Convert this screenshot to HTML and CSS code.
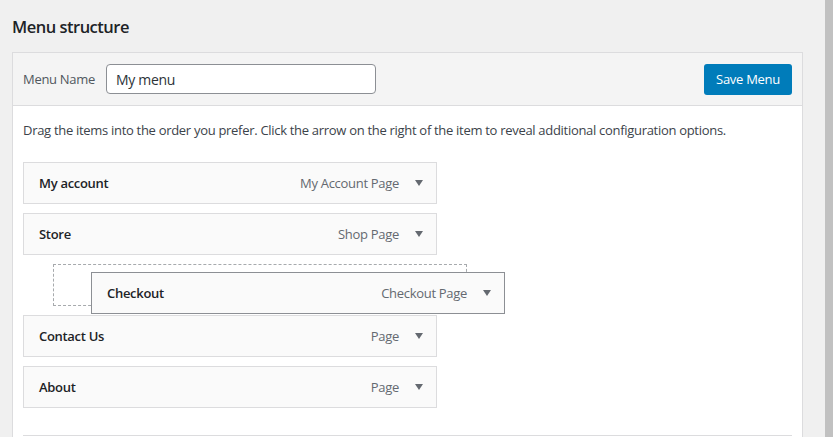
FILE: index.html
```html
<!DOCTYPE html>
<html lang="en">
<head>
<meta charset="utf-8">
<title>Menu structure</title>
<link rel="stylesheet" href="styles.css">
</head>
<body>
<div class="main">
  <h2 class="title">Menu structure</h2>
  <div class="panel">
    <div class="panel-header">
      <label class="name-label" for="menu-name">Menu Name</label>
      <input id="menu-name" class="name-input" type="text" value="My menu">
      <button class="save-btn" type="button">Save Menu</button>
    </div>
    <div class="panel-body">
      <p class="hint">Drag the items into the order you prefer. Click the arrow on the right of the item to reveal additional configuration options.</p>
      <ul class="menu-list">
        <li class="item"><span class="item-title">My account</span><span class="item-type">My Account Page</span><span class="arrow"></span></li>
        <li class="item"><span class="item-title">Store</span><span class="item-type">Shop Page</span><span class="arrow"></span></li>
        <li class="placeholder">
          <div class="item dragging"><span class="item-title">Checkout</span><span class="item-type">Checkout Page</span><span class="arrow"></span></div>
        </li>
        <li class="item"><span class="item-title">Contact Us</span><span class="item-type">Page</span><span class="arrow"></span></li>
        <li class="item"><span class="item-title">About</span><span class="item-type">Page</span><span class="arrow"></span></li>
      </ul>
      <div class="panel-footer"></div>
    </div>
  </div>
</div>
<div class="scrollbar"></div>
</body>
</html>
```

FILE: styles.css
```css
* { box-sizing: border-box; }
html, body { margin: 0; padding: 0; }
body {
  background: #f0f0f0;
  font-family: "Open Sans", "Noto Sans", sans-serif;
  font-size: 13px;
  letter-spacing: -0.3px;
  color: #3c434a;
  display: flex;
  height: 437px;
  overflow: hidden;
}
.main {
  flex: 1;
  padding: 0 22px 0 12px;
}
.title {
  margin: 0;
  padding-top: 16px;
  height: 52px;
  font-size: 16.5px;
  letter-spacing: -0.5px;
  font-weight: 600;
  color: #1d2327;
  line-height: 22px;
}
.panel {
  border: 1px solid #dcdcde;
  background: #fff;
}
.panel-header {
  background: #f4f4f4;
  border-bottom: 1px solid #dcdcde;
  height: 53px;
  display: flex;
  align-items: center;
  padding: 0 10px;
}
.name-label {
  color: #50575e;
  font-size: 13px;
  margin-right: 11px;
}
.name-input {
  width: 270px;
  height: 30px;
  border: 1px solid #8c8f94;
  border-radius: 4px;
  padding: 0 9px;
  font-family: inherit;
  font-size: 14px;
  letter-spacing: -0.3px;
  color: #2c3338;
  background: #fff;
}
.save-btn {
  margin-left: auto;
  width: 88px;
  height: 31px;
  background: #007cba;
  border: none;
  border-radius: 3px;
  color: #fff;
  font-family: inherit;
  font-size: 13px;
  letter-spacing: -0.3px;
  padding: 0;
}
.panel-body {
  padding: 0 10px;
}
.hint {
  margin: 0;
  padding-top: 14px;
  height: 56px;
  line-height: 20px;
  color: #3c434a;
}
.menu-list {
  list-style: none;
  margin: 0;
  padding: 0;
  display: flex;
  flex-direction: column;
  gap: 9px;
}
.item {
  width: 414px;
  height: 42px;
  background: #fafafa;
  border: 1px solid #dcdcde;
  display: flex;
  align-items: center;
  padding: 0 13px 0 15px;
}
.item-title {
  flex: 1;
  font-weight: 600;
  color: #1d2327;
}
.item-type {
  color: #646970;
  margin-right: 16px;
}
.arrow {
  width: 0;
  height: 0;
  border-left: 4px solid transparent;
  border-right: 4px solid transparent;
  border-top: 6px solid #646970;
}
.placeholder {
  position: relative;
  margin-left: 30px;
  width: 414px;
  height: 42px;
  border: 1px dashed #a7aaad;
}
.dragging {
  position: absolute;
  left: 37px;
  top: 7px;
  border-color: #8c8f94;
}
.panel-footer {
  margin-top: 27px;
  border-top: 1px solid #dcdcde;
  height: 20px;
}
.scrollbar {
  width: 8px;
  background: #c1c1c1;
}
```
